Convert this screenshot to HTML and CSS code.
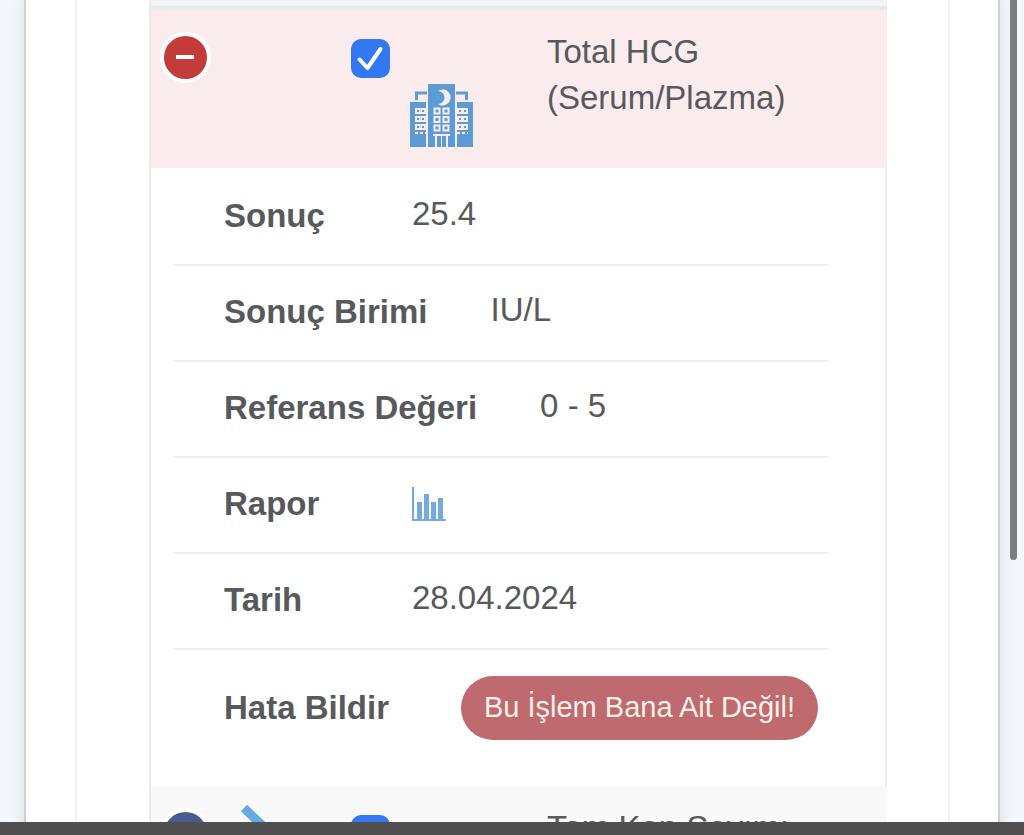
FILE: index.html
```html
<!DOCTYPE html>
<html lang="tr">
<head>
    <meta charset="UTF-8">
    <meta name="viewport" content="width=device-width, initial-scale=1">
    <title>Tahlillerim</title>
    <link rel="stylesheet" href="styles.css">
</head>
<body>
    <main class="page">
        <div class="card">
            <div class="card-inner">
                <table class="results">
                    <colgroup>
                        <col class="col-toggle">
                        <col class="col-status">
                        <col class="col-check">
                        <col class="col-source">
                        <col>
                    </colgroup>
                    <tbody>
                        <tr class="spacer"><td colspan="5"></td></tr>
                        <tr class="result open">
                            <td class="cell-toggle">
                                <button type="button" class="toggle" aria-label="Kapat" aria-expanded="true">
                                    <svg viewBox="0 0 43 43"><path d="M12 21h18" /></svg>
                                </button>
                            </td>
                            <td></td>
                            <td class="cell-check">
                                <label class="check">
                                    <input type="checkbox" aria-label="Total HCG seç" checked>
                                    <svg viewBox="0 0 39 39"><path d="M8.500 20.500L16.500 29L29.500 10" /></svg>
                                </label>
                            </td>
                            <td class="cell-source">
                                <svg class="hospital" viewBox="0 0 63 63" role="img" aria-label="Hastane">
                                    <path d="M0 18h16v45H0zM47 18h16v45H47zM18 0h27v63H18z" />
                                    <path class="roof" d="M6.500 16V9H17M56.500 16V9H46" />
                                    <path class="door" d="M23 51h17M26 51v12M37 51v12" />
                                    <path class="door thin" d="M31.500 52v11" />
                                    <path class="moon" d="M28 7a8 8 0 1 1 0 13a6.500 6.500 0 1 0 0-13z" />
                                    <g class="windows">
                                        <path d="M24.500 24.500h5v5h-5zM33.500 24.500h5v5h-5zM24.500 33h5v5h-5zM33.500 33h5v5h-5zM24.500 41.500h5v5h-5zM33.500 41.500h5v5h-5z" />
                                        <path d="M6 25h4v4H6zM11 25h4v4h-4zM6 33h4v4H6zM11 33h4v4h-4zM6 41h4v4H6zM11 41h4v4h-4z" />
                                        <path d="M48 25h4v4h-4zM53 25h4v4h-4zM48 33h4v4h-4zM53 33h4v4h-4zM48 41h4v4h-4zM53 41h4v4h-4z" />
                                        <path stroke-dasharray="3 2" d="M5 49h11M47 49h11" />
                                    </g>
                                </svg>
                            </td>
                            <td class="cell-name">Total HCG (Serum/Plazma)</td>
                        </tr>
                        <tr class="detail">
                            <td colspan="5">
                                <ul class="detail-list">
                                    <li><span class="title">Sonuç</span><span class="value">25.4</span></li>
                                    <li><span class="title">Sonuç Birimi</span><span class="value">IU/L</span></li>
                                    <li><span class="title">Referans Değeri</span><span class="value">0 - 5</span></li>
                                    <li>
                                        <span class="title">Rapor</span>
                                        <a href="#" class="report" aria-label="Rapor">
                                            <svg viewBox="0 0 34 34">
                                                <path class="axis" d="M1 0v33h33" />
                                                <path d="M5 15h5v18H5zM12 7h5v26h-5zM19 15h5v18h-5zM26 11h5v22h-5z" />
                                            </svg>
                                        </a>
                                    </li>
                                    <li><span class="title">Tarih</span><span class="value">28.04.2024</span></li>
                                    <li class="last">
                                        <span class="title">Hata Bildir</span>
                                        <button type="button" class="report-error">Bu İşlem Bana Ait Değil!</button>
                                    </li>
                                </ul>
                            </td>
                        </tr>
                        <tr class="result closed">
                            <td class="cell-toggle">
                                <button type="button" class="toggle" aria-label="Aç" aria-expanded="false">
                                    <svg viewBox="0 0 43 43"><path d="M12 21h18M21 10v22" /></svg>
                                </button>
                            </td>
                            <td class="cell-status">
                                <svg class="arrow" viewBox="0 0 40 60"><path d="M5 5L31 30L5 55" /></svg>
                            </td>
                            <td class="cell-check">
                                <label class="check">
                                    <input type="checkbox" aria-label="Tam Kan Sayımı seç" checked>
                                    <svg viewBox="0 0 39 39"><path d="M8.500 20.500L16.500 29L29.500 10" /></svg>
                                </label>
                            </td>
                            <td></td>
                            <td class="cell-name">Tam Kan Sayımı</td>
                        </tr>
                    </tbody>
                </table>
            </div>
        </div>
    </main>
    <div class="scrollbar"></div>
    <div class="bottom-bar"></div>
</body>
</html>
```
FILE: styles.css
```css
* {
    box-sizing: border-box;
}
body {
    margin: 0;
    font-family: "Liberation Sans", Arial, sans-serif;
    font-size: 33px;
    line-height: 46px;
    color: #58595d;
    background-color: #f4f7fb;
}
svg {
    display: block;
}
.page {
    height: 100vh;
    overflow: hidden;
}
.card {
    margin: 0 24px;
    padding: 0 48px 0 49px;
    background-color: #fff;
    border: solid #cdd0d0;
    border-width: 0 2px;
    box-shadow: 0 0 16px rgba(0, 0, 0, 0.12);
}
.card-inner {
    padding: 0 61px 0 72px;
    border: solid #f1f1f1;
    border-width: 0 2px;
}

/* results table */
.results {
    width: 100%;
    table-layout: fixed;
    border-collapse: separate;
    border-spacing: 0;
    border-left: 2px solid #ebebeb;
}
.results td {
    padding: 0;
    vertical-align: top;
}
.col-toggle {
    width: 75px;
}
.col-status {
    width: 113px;
}
.col-check {
    width: 59px;
}
.col-source {
    width: 149px;
}
.spacer td {
    height: 10px;
    background-color: #f4f4f4;
    border-bottom: 4px solid #e8e9e9;
}
.result {
    height: 158px;
}
.result.open {
    background-color: #faeced;
}
.result.closed {
    background-color: #f8f8f8;
}
.results .cell-toggle {
    padding: 22px 0 0 9px;
}
.results .cell-status {
    padding: 17px 0 0 13px;
}
.results .cell-check {
    padding: 29px 0 0 12px;
}
.results .cell-source {
    padding: 74px 0 0 12px;
}
.results .cell-name {
    padding: 19px 90px 0 0;
}

.toggle {
    display: block;
    width: 51px;
    height: 51px;
    padding: 0;
    border: 4px solid #fff;
    border-radius: 50%;
    background-color: #c33c39;
}
.closed .toggle {
    background-color: #4a5b8f;
}
.toggle path {
    stroke: #fff;
    stroke-width: 4;
}
.check {
    position: relative;
    display: block;
    width: 39px;
    height: 39px;
}
.check input {
    appearance: none;
    display: block;
    width: 100%;
    height: 100%;
    margin: 0;
    border-radius: 10px;
    background-color: #3377f1;
}
.check svg {
    position: absolute;
    inset: 0;
    fill: none;
    stroke: #fff;
    stroke-width: 4;
    stroke-linecap: round;
    stroke-linejoin: round;
}
.arrow {
    width: 40px;
    fill: none;
    stroke: #68aadf;
    stroke-width: 9;
}
.hospital {
    width: 63px;
    fill: #5d9bd4;
}
.hospital .roof {
    fill: none;
    stroke: #5d9bd4;
    stroke-width: 3;
}
.hospital .door {
    fill: none;
    stroke: #faeced;
    stroke-width: 2;
}
.hospital .thin {
    stroke-width: 1;
}
.hospital .moon {
    fill: #faeced;
}
.hospital .windows {
    stroke: #faeced;
    stroke-width: 2;
}

/* opened row */
.detail td {
    padding: 2px 57px 20px 22px;
    border-right: 2px solid #ececec;
}
.detail-list {
    margin: 0;
    padding: 0;
    list-style: none;
}
.detail-list li {
    display: flex;
    align-items: center;
    height: 96px;
    padding: 0 0 2px 51px;
    border-bottom: 2px solid #efefef;
}
.detail-list .last {
    height: 116px;
    padding: 0 10px 0 51px;
    border-bottom: 0;
}
.title {
    min-width: 125px;
    margin-right: 63px;
    font-weight: bold;
    white-space: nowrap;
}
.value {
    padding-bottom: 5px;
}
.report svg {
    width: 34px;
    fill: #74aade;
}
.report .axis {
    fill: none;
    stroke: #74aade;
    stroke-width: 2;
}
.report-error {
    min-width: 357px;
    height: 64px;
    margin-left: auto;
    padding: 0 20px 2px;
    border: 0;
    border-radius: 32px;
    background-color: #be6a6f;
    color: #fdf0e8;
    font-family: inherit;
    font-size: 29px;
    white-space: nowrap;
}

.scrollbar {
    position: fixed;
    top: -20px;
    right: 7px;
    width: 7px;
    height: 580px;
    border-radius: 4px;
    background-color: #7c7d7f;
}
.bottom-bar {
    position: fixed;
    right: 0;
    bottom: 0;
    left: 0;
    height: 13px;
    background-color: #505050;
}
```
